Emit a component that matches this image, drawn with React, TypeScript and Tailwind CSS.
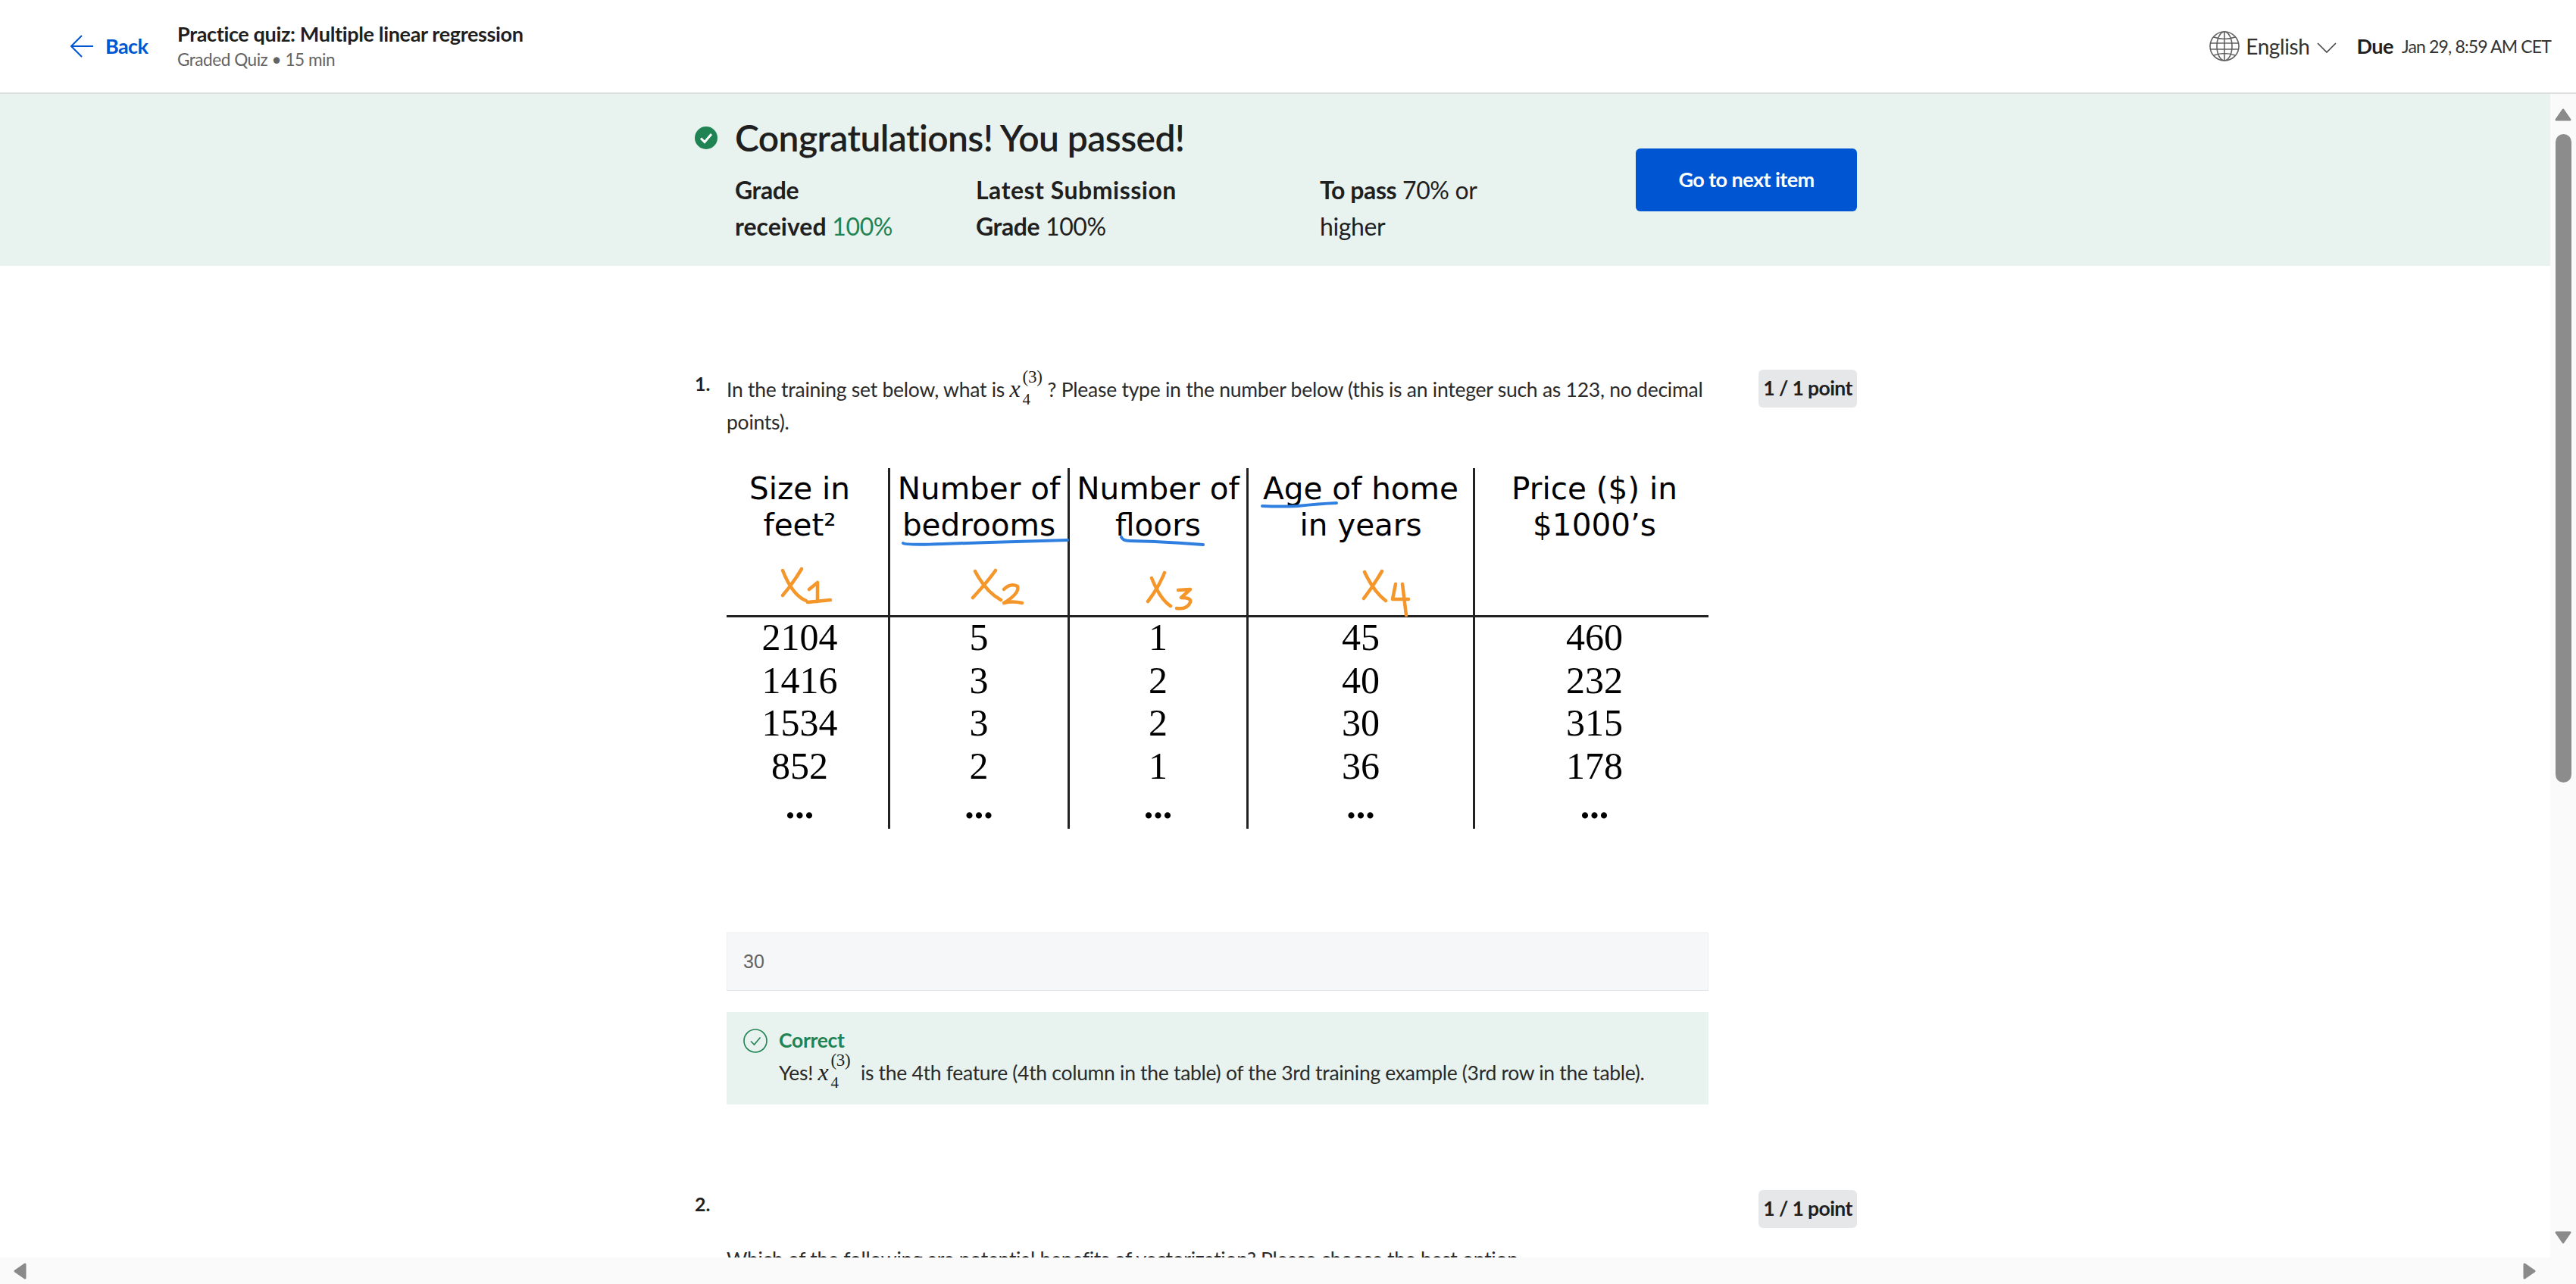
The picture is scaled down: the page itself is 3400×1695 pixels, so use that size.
import React from "react";

const Math4 = () => (
  <span className="font-['Liberation_Serif',serif] text-[#1f1f1f]">
    <span className="italic text-[32px]">x</span>
    <span className="inline-block w-[3px]" />
    <span className="inline-block w-0 h-0 leading-[0] align-[19px] text-[23px] whitespace-nowrap">(3)</span>
    <span className="inline-block w-[33px] h-0 leading-[0] align-[-10px] text-[21px]">4</span>
  </span>
);

const Badge = () => (
  <div className="w-[130px] h-[50px] shrink-0 rounded-[6px] bg-[#e5e7e8] flex items-center justify-center text-[26.5px] font-bold text-[#1f1f1f] tracking-[-0.6px]">
    1 / 1 point
  </div>
);

const Num = ({ n }: { n: string }) => (
  <div className="w-[42px] shrink-0 leading-[36px] text-[25px] font-bold text-[#1f1f1f]">{n}</div>
);

const cols = ["w-[216px] pr-[20px]", "w-[237px]", "w-[236px]", "w-[299px]", "w-[308px] pl-[7px]"];
const heads: string[][] = [["Size in", "feet²"], ["Number of", "bedrooms"], ["Number of", "floors"], ["Age of home", "in years"], ["Price ($) in", "$1000’s"]];
const body: string[][] = [
  ["2104", "1416", "1534", "852", "..."],
  ["5", "3", "3", "2", "..."],
  ["1", "2", "2", "1", "..."],
  ["45", "40", "30", "36", "..."],
  ["460", "232", "315", "178", "..."],
];

const Table = () => (
  <div className="relative w-[1296px] h-[476px] mt-[38px] flex text-black">
    {cols.map((c, i) => (
      <div key={i} className={`${c} h-full flex flex-col text-center ${i < 4 ? "border-r-[3px] border-[#222]" : ""}`}>
        <div className="h-[195px] shrink-0 pt-[3px] font-['DejaVu_Sans',sans-serif] text-[40.5px] leading-[48px] whitespace-nowrap">
          {heads[i].map((h) => (
            <div key={h}>{h}</div>
          ))}
        </div>
        <div className="font-['Liberation_Serif',serif] text-[50px] leading-[56.5px]">
          {body[i].map((v, j) => (
            <div key={j} className={j === 4 ? "font-bold -mt-[4px]" : ""}>{v}</div>
          ))}
        </div>
      </div>
    ))}
    <div className="absolute left-0 right-0 top-[194px] h-[3px] bg-[#222]" />
    <svg className="absolute inset-0 w-full h-full" viewBox="958 617 1296 476" fill="none" strokeLinecap="round" strokeLinejoin="round">
      <g stroke="#2f7fe0" strokeWidth="4">
        <path d="M1191 716Q1195 719 1244 717Q1330 714 1408 712" />
        <path d="M1479 708Q1481 713 1490 713Q1540 714 1587 718" />
        <path d="M1665 667Q1690 668 1712 667Q1740 664 1763 663" />
      </g>
      <g stroke="#f4962a" strokeWidth="4.5">
        <path d="M1032 752Q1045 785 1063 792M1057 750Q1045 770 1032 785M1067 777L1078 768L1078 793M1065 794L1095 791" />
        <path d="M1286 753Q1300 780 1320 791M1313 752Q1300 770 1283 788M1324 777Q1333 768 1342 773Q1345 782 1324 795Q1335 792 1348 795" />
        <path d="M1519 762Q1530 790 1544 799M1536 755Q1528 775 1514 793M1554 778L1570 777L1558 788Q1572 788 1570 794Q1566 804 1552 802" />
        <path d="M1800 754Q1812 780 1828 792M1823 753Q1812 772 1799 789M1841 770L1837 790L1858 790M1850 770L1855 811" />
      </g>
    </svg>
  </div>
);

export default function App() {
  return (
    <div className="w-[3400px] h-[1695px] overflow-hidden flex flex-col bg-white font-['Lato',sans-serif] text-[#1f1f1f]">
      <header className="h-[124px] shrink-0 border-b-2 border-[#dcdedf] flex items-center pl-[93px] pr-[33px] shadow-[0_1px_2px_rgba(0,0,0,0.06)]">
        <svg width="30" height="30" viewBox="0 0 30 30" fill="none" stroke="#0056d2" strokeWidth="2" className="mr-[16px]">
          <path d="M15 1L1 15L15 29M1 15H30" />
        </svg>
        <span className="w-[95px] text-[27px] font-bold text-[#0056d2] tracking-[-0.6px]">Back</span>
        <div className="flex flex-col">
          <span className="text-[27px] leading-[36px] font-bold tracking-[-0.35px]">Practice quiz: Multiple linear regression</span>
          <span className="text-[22.5px] leading-[32px] text-[#636363] tracking-[-0.45px]">Graded Quiz • 15 min</span>
        </div>
        <div className="ml-auto flex items-center">
          <svg width="40" height="40" viewBox="0 0 40 40" fill="none" stroke="#636363" strokeWidth="1.6" className="mr-[8px]">
            <circle cx="20" cy="20" r="19" />
            <ellipse cx="20" cy="20" rx="10" ry="19" />
            <path d="M20 1V39M2 16H38M2 24H38M6 8Q20 13 34 8M6 32Q20 27 34 32" />
          </svg>
          <span className="text-[28px] tracking-[-0.4px] text-[#333]">English</span>
          <svg width="26" height="14" viewBox="0 0 26 14" fill="none" stroke="#444" strokeWidth="1.6" className="ml-[9px] mr-[27px] mt-[4px]">
            <path d="M1 1L13 13L25 1" />
          </svg>
          <span className="text-[27px] font-bold tracking-[-0.5px] mr-[11px]">Due</span>
          <span className="text-[23px] tracking-[-0.85px] text-[#333]">Jan 29, 8:59 AM CET</span>
        </div>
      </header>

      <div className="flex-1 min-h-0 flex">
        <main className="flex-1 min-w-0 overflow-hidden">
          <section className="h-[227px] bg-[#e8f2ee]">
            <div className="ml-[917px] w-[1534px] flex justify-between">
              <div className="pt-[28px]">
                <div className="flex items-center h-[60px]">
                  <svg width="30" height="30" viewBox="0 0 30 30" className="mr-[23px]">
                    <circle cx="15" cy="15" r="15" fill="#1f8354" />
                    <path d="M8 15.5L13 20.5L22 10" fill="none" stroke="#fff" strokeWidth="3" />
                  </svg>
                  <h1 className="text-[48px] font-semibold tracking-[-0.6px] whitespace-nowrap">Congratulations! You passed!</h1>
                </div>
                <div className="flex ml-[53px] mt-[15px] text-[32px] leading-[48px] tracking-[-0.4px] whitespace-nowrap">
                  <div className="w-[318px]">
                    <b className="font-bold">Grade</b>
                    <br />
                    <b className="font-bold tracking-[0px]">received</b> <span className="text-[#1f8354]">100%</span>
                  </div>
                  <div className="w-[454px]">
                    <b className="font-bold tracking-[0.5px]">Latest Submission</b>
                    <br />
                    <b className="font-bold">Grade</b> 100%
                  </div>
                  <div>
                    <b className="font-bold">To pass</b> 70% or
                    <br />
                    higher
                  </div>
                </div>
              </div>
              <button className="mt-[72px] w-[292px] h-[83px] rounded-[6px] bg-[#0056d2] text-white text-[27px] font-bold tracking-[-0.55px]">
                Go to next item
              </button>
            </div>
          </section>

          <div className="ml-[917px] w-[1534px] mt-[137px] flex">
            <Num n="1." />
            <div className="w-[1296px]">
              <div className="pt-[4px] pb-[2px] text-[26.5px] leading-[42px] text-[#2a2a2a] tracking-[-0.25px] whitespace-nowrap">
                In the training set below, what is <Math4 />? Please type in the number below (this is an integer such as 123, no decimal
                <br />
                points).
              </div>
              <Table />
              <div className="mt-[137px] h-[77px] bg-[#f5f7f8] border border-[#eceeef] border-b-[#e3e5e6] flex items-center pl-[21px] font-['Liberation_Sans',sans-serif] text-[25px] text-[#636363]">
                30
              </div>
              <div className="mt-[28px] h-[122px] bg-[#e8f2ee] flex px-[22px] pt-[22px]">
                <svg width="32" height="32" viewBox="0 0 32 32" fill="none" stroke="#1f8354" strokeWidth="1.6" className="mr-[15px] shrink-0">
                  <circle cx="16" cy="16" r="15" />
                  <path d="M10 16.5L14.5 21L22.5 11.5" />
                </svg>
                <div className="text-[26.5px] leading-[42px] tracking-[-0.3px] whitespace-nowrap -mt-[6px]">
                  <div className="font-bold text-[#1f8354]">Correct</div>
                  <div className="text-[#2a2a2a]">
                    Yes! <Math4 /> is the 4th feature (4th column in the table) of the 3rd training example (3rd row in the table).
                  </div>
                </div>
              </div>
            </div>
            <div className="ml-auto">
              <Badge />
            </div>
          </div>

          <div className="ml-[917px] w-[1534px] mt-[113px] flex">
            <Num n="2." />
            <div className="w-[1296px] pt-[70px] text-[26.5px] leading-[42px] text-[#2a2a2a] tracking-[-0.3px] whitespace-nowrap">
              Which of the following are potential benefits of vectorization? Please choose the best option.
            </div>
            <div className="ml-auto">
              <Badge />
            </div>
          </div>
        </main>

        <aside className="w-[34px] shrink-0 bg-[#fafafa] flex flex-col items-center pt-[19px] pb-[18px]">
          <svg width="22" height="17" viewBox="0 0 22 17" fill="#8a8a8a" stroke="#8a8a8a" strokeWidth="3" strokeLinejoin="round">
            <path d="M11 2L20 15H2Z" />
          </svg>
          <div className="mt-[17px] w-[21px] h-[856px] rounded-full bg-[#8c8c8c]" />
          <svg width="22" height="17" viewBox="0 0 22 17" fill="#8a8a8a" stroke="#8a8a8a" strokeWidth="3" strokeLinejoin="round" className="mt-auto">
            <path d="M11 15L20 2H2Z" />
          </svg>
        </aside>
      </div>

      <footer className="h-[35px] shrink-0 bg-[#fafafa] flex items-center justify-between pl-[18px] pr-[53px]">
        <svg width="17" height="22" viewBox="0 0 17 22" fill="#8a8a8a" stroke="#8a8a8a" strokeWidth="3" strokeLinejoin="round">
          <path d="M2 11L15 2V20Z" />
        </svg>
        <svg width="17" height="22" viewBox="0 0 17 22" fill="#8a8a8a" stroke="#8a8a8a" strokeWidth="3" strokeLinejoin="round">
          <path d="M15 11L2 2V20Z" />
        </svg>
      </footer>
    </div>
  );
}
